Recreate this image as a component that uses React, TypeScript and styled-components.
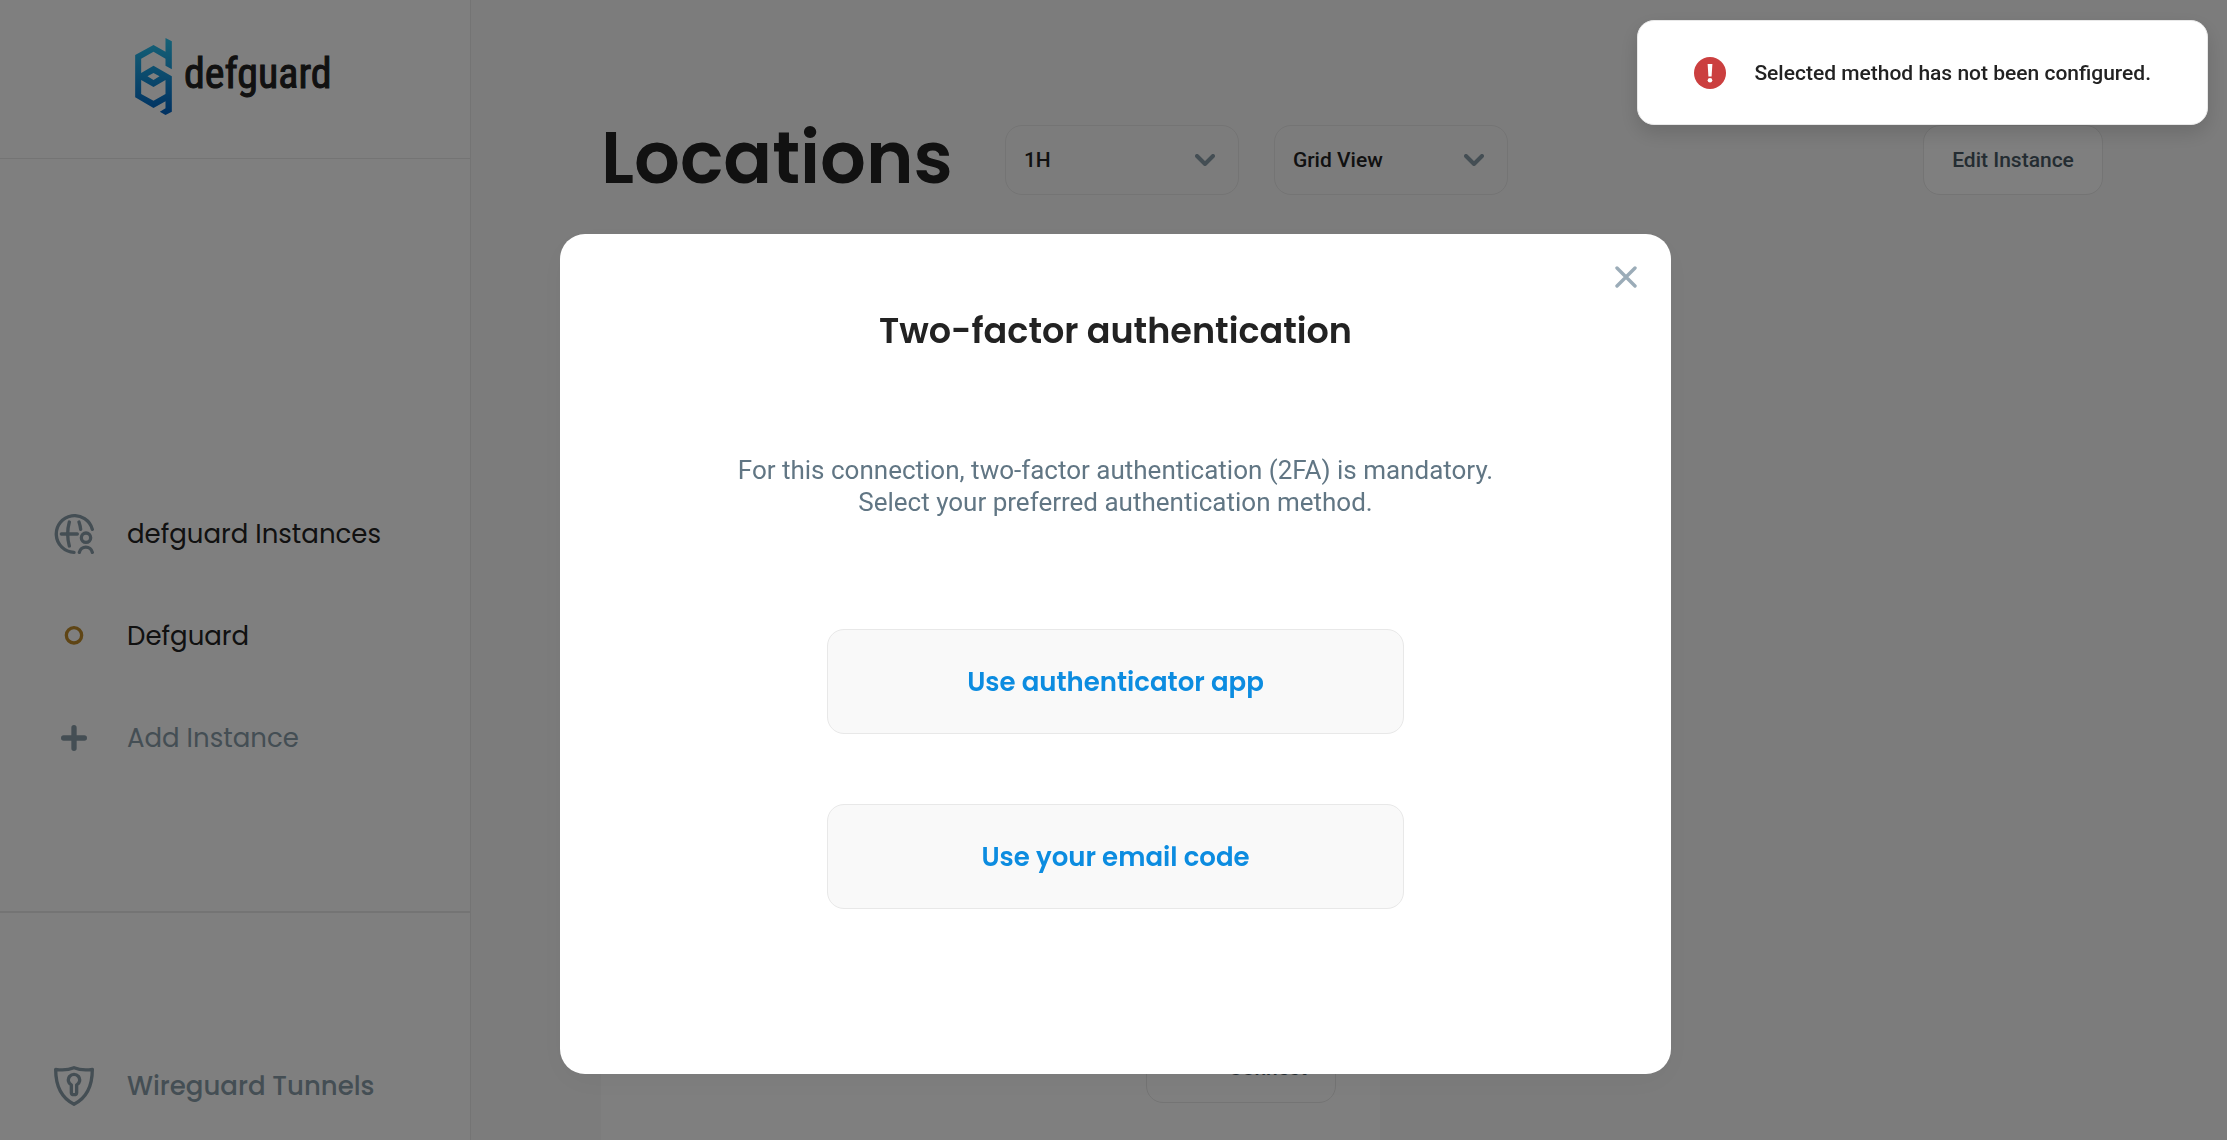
import React from "react";
import styled, { createGlobalStyle } from "styled-components";

const heading = `Poppins, Inter, "Open Sans", sans-serif`;
const body = `Roboto, "Liberation Sans", sans-serif`;

const GlobalStyle = createGlobalStyle`
  *, *::before, *::after { box-sizing: border-box; }
  body { margin: 0; background: #f9f9f9; color: #222222; font-family: ${body}; }
  button, select { font: inherit; color: inherit; cursor: pointer; }
  h1, h2, p { margin: 0; }
`;

const Page = styled.div`
  display: flex;
  height: 100vh;
  overflow: hidden;
`;

const Sidebar = styled.aside`
  display: flex;
  flex-direction: column;
  flex: 0 0 471px;
  background: #ffffff;
  border-right: 1px solid #e8e8e8;
`;

const Brand = styled.a`
  display: flex;
  align-items: center;
  gap: 12px;
  height: 159px;
  padding: 0 0 6px 135px;
  border-bottom: 1px solid #e8e8e8;
  color: #222222;
  text-decoration: none;
`;

const Wordmark = styled.span`
  padding-bottom: 4px;
  font: 400 42px/56px "Liberation Sans Narrow", "Roboto Condensed", "DejaVu Sans Condensed", sans-serif;
  -webkit-text-stroke: 1px currentColor;
`;

const NavGroup = styled.nav<{ $fill?: boolean }>`
  display: flex;
  flex-direction: column;
  flex: ${(p) => (p.$fill ? "1 0 auto" : "0 0 229px")};
  justify-content: ${(p) => (p.$fill ? "flex-end" : "flex-start")};
  padding: ${(p) => (p.$fill ? "0 0 122px" : "122px 0 0")};
  border-top: ${(p) => (p.$fill ? "none" : "2px solid #e8e8e8")};
`;

const NavItem = styled.button<{ $muted?: boolean; $strong?: boolean }>`
  display: flex;
  align-items: center;
  gap: 33px;
  height: 102px;
  flex: none;
  padding: 0 54px;
  border: 0;
  background: none;
  color: ${(p) => (p.$muted ? "#899ca8" : "#222222")};
  font: ${(p) => (p.$strong ? 500 : 400)} 26px/38px ${heading};
  text-align: left;
`;

const NavIcon = styled.svg`
  width: 40px;
  height: 40px;
  flex: none;
  fill: none;
  stroke: #899ca8;
  stroke-width: 10;
  stroke-linecap: round;
  stroke-linejoin: round;
`;

const Main = styled.main`
  display: flex;
  flex-direction: column;
  flex: 1;
  min-width: 0;
  gap: 70px;
  padding: 125px 124px 0 130px;
`;

const Header = styled.header`
  display: flex;
  align-items: center;
  height: 70px;
`;

const Title = styled.h1`
  margin-right: 52px;
  padding-bottom: 4px;
  font: 600 72px/70px ${heading};
`;

const Filters = styled.div`
  display: flex;
  gap: 35px;
  margin-right: auto;
`;

const Field = styled.label`
  display: grid;
  align-items: center;
  width: 234px;

  & > * { grid-area: 1 / 1; }
`;

const Select = styled.select`
  appearance: none;
  height: 70px;
  padding: 0 18px;
  border: 1px solid #e8e8e8;
  border-radius: 17px;
  background: #f9f9f9;
  font: 500 21px/24px ${body};
`;

const Chevron = styled.svg`
  width: 20px;
  height: 12px;
  margin-right: 24px;
  justify-self: end;
  fill: none;
  stroke: #899ca8;
  stroke-width: 4;
  stroke-linecap: round;
  stroke-linejoin: round;
  pointer-events: none;
`;

const ActionButton = styled.button<{ $wide?: boolean }>`
  display: flex;
  align-items: center;
  justify-content: ${(p) => (p.$wide ? "flex-end" : "center")};
  width: ${(p) => (p.$wide ? "190px" : "180px")};
  height: 70px;
  padding: 0 28px;
  border: 1px solid #e8e8e8;
  border-radius: 17px;
  background: #ffffff;
  color: #485964;
  font: 500 21px/24px ${body};
  white-space: nowrap;
`;

const Grid = styled.section`
  display: grid;
  grid-template-columns: minmax(0, 779px);
  flex: 1;
`;

const LocationCard = styled.article`
  display: flex;
  align-items: flex-end;
  justify-content: flex-end;
  padding: 0 44px 37px;
  background: #ffffff;
`;

const Overlay = styled.div`
  position: fixed;
  inset: 0;
  display: flex;
  align-items: flex-start;
  justify-content: center;
  padding: 234px 0 0 4px;
  background: rgba(0, 0, 0, 0.5);
`;

const Modal = styled.div`
  position: relative;
  display: flex;
  flex-direction: column;
  align-items: center;
  width: 50%;
  padding: 72px 24px 165px;
  border-radius: 25px;
  background: #ffffff;
  box-shadow: 0 8px 32px rgba(0, 0, 0, 0.04);
`;

const CloseButton = styled.button`
  position: absolute;
  top: 27px;
  right: 29px;
  display: grid;
  place-items: center;
  width: 32px;
  height: 32px;
  padding: 0;
  border: 0;
  background: none;

  svg { fill: none; stroke: #9bacb8; stroke-width: 3.4; stroke-linecap: round; }
`;

const ModalTitle = styled.h2`
  font: 600 35px/50px ${heading};
  text-align: center;
`;

const ModalText = styled.p`
  margin: 98px 0 111px;
  color: #617684;
  font: 400 26px/32px ${body};
  text-align: center;
`;

const Methods = styled.div`
  display: flex;
  flex-direction: column;
  gap: 70px;
  width: 577px;
  max-width: 100%;
`;

const MethodButton = styled.button`
  height: 105px;
  border: 1px solid #e8e8e8;
  border-radius: 17px;
  background: #f9f9f9;
  color: #0c8ce0;
  font: 600 26px/38px ${heading};
`;

const Toast = styled.div`
  position: fixed;
  top: 20px;
  right: 19px;
  display: flex;
  align-items: center;
  gap: 28px;
  height: 105px;
  padding: 0 56px;
  border: 1px solid #e8e8e8;
  border-radius: 17px;
  background: #ffffff;
  color: #222222;
  font: 500 21px/24px ${body};
  box-shadow: 0 8px 20px rgba(0, 0, 0, 0.14);
`;

const LogoMark = () => (
  <svg width="37" height="77" viewBox="0 0 110 231" aria-hidden="true">
    <defs>
      <linearGradient id="mark" x1="0" y1="0" x2="0" y2="1">
        <stop offset="0" stopColor="#2cc4ee" />
        <stop offset="1" stopColor="#0062c4" />
      </linearGradient>
    </defs>
    <path
      fill="url(#mark)"
      fillRule="evenodd"
      d="M91 0L110 10V94L91 83V62L55 41L18 62V105L55 83L110 115V221L91 231L74 221L91 211V190L55 210L0 178V51L55 21L91 41ZM18 126L55 147L91 126V168L55 188L18 168ZM37 115L55 105L73 115L55 126Z"
    />
  </svg>
);

const GlobeUserIcon = () => (
  <NavIcon viewBox="0 0 120 120" aria-hidden="true">
    <path d="M115 46A55 55 0 1 0 60 115M22 60H70M46 24Q36 60 46 96M75 24Q79 36 80 46M76 115A20 20 0 0 1 115 115" />
    <circle cx="96" cy="71" r="14" />
  </NavIcon>
);

const StatusRing = styled.circle`
  stroke: #be8b2a;
`;

const StatusIcon = () => (
  <NavIcon viewBox="0 0 120 120" aria-hidden="true">
    <StatusRing cx="60" cy="58" r="23" />
  </NavIcon>
);

const PlusStroke = styled.path`
  stroke-width: 16;
`;

const PlusIcon = () => (
  <NavIcon viewBox="0 0 120 120" aria-hidden="true">
    <PlusStroke d="M60 29V91M29 60H91" />
  </NavIcon>
);

const ShieldIcon = () => (
  <NavIcon viewBox="0 0 120 120" aria-hidden="true">
    <path d="M5 10Q36 15 60 5Q84 15 115 10C115 66 94 98 60 115C26 98 5 66 5 10ZM52 57A17 17 0 1 1 68 57V80Q68 86 60 86Q52 86 52 80Z" />
  </NavIcon>
);

const Dropdown = ({ label, value }: { label: string; value: string }) => (
  <Field>
    <Select aria-label={label} defaultValue={value}>
      <option>{value}</option>
    </Select>
    <Chevron viewBox="0 0 20 12" aria-hidden="true">
      <path d="M2 2L10 10L18 2" />
    </Chevron>
  </Field>
);

export default function App() {
  return (
    <>
      <GlobalStyle />
      <Page>
        <Sidebar>
          <Brand href="#">
            <LogoMark />
            <Wordmark>defguard</Wordmark>
          </Brand>
          <NavGroup $fill>
            <NavItem><GlobeUserIcon />defguard Instances</NavItem>
            <NavItem><StatusIcon />Defguard</NavItem>
            <NavItem $muted><PlusIcon />Add Instance</NavItem>
          </NavGroup>
          <NavGroup>
            <NavItem $muted $strong><ShieldIcon />Wireguard Tunnels</NavItem>
          </NavGroup>
        </Sidebar>
        <Main>
          <Header>
            <Title>Locations</Title>
            <Filters>
              <Dropdown label="Time range" value="1H" />
              <Dropdown label="Layout" value="Grid View" />
            </Filters>
            <ActionButton>Edit Instance</ActionButton>
          </Header>
          <Grid>
            <LocationCard>
              <ActionButton $wide>Connect</ActionButton>
            </LocationCard>
          </Grid>
        </Main>
      </Page>
      <Overlay>
        <Modal role="dialog" aria-modal="true" aria-labelledby="mfa-title">
          <CloseButton aria-label="Close">
            <svg width="22" height="22" viewBox="0 0 22 22">
              <path d="M2 2L20 20M20 2L2 20" />
            </svg>
          </CloseButton>
          <ModalTitle id="mfa-title">Two-factor authentication</ModalTitle>
          <ModalText>
            For this connection, two-factor authentication (2FA) is mandatory.
            <br />
            Select your preferred authentication method.
          </ModalText>
          <Methods>
            <MethodButton>Use authenticator app</MethodButton>
            <MethodButton>Use your email code</MethodButton>
          </Methods>
        </Modal>
      </Overlay>
      <Toast role="alert">
        <svg width="32" height="32" viewBox="0 0 32 32" aria-hidden="true">
          <circle cx="16" cy="16" r="16" fill="#cb3f3f" />
          <path d="M13.6 7H18.4L17.6 19.5H14.4Z" fill="#fff" />
          <circle cx="16" cy="23.3" r="2.3" fill="#fff" />
        </svg>
        Selected method has not been configured.
      </Toast>
    </>
  );
}
